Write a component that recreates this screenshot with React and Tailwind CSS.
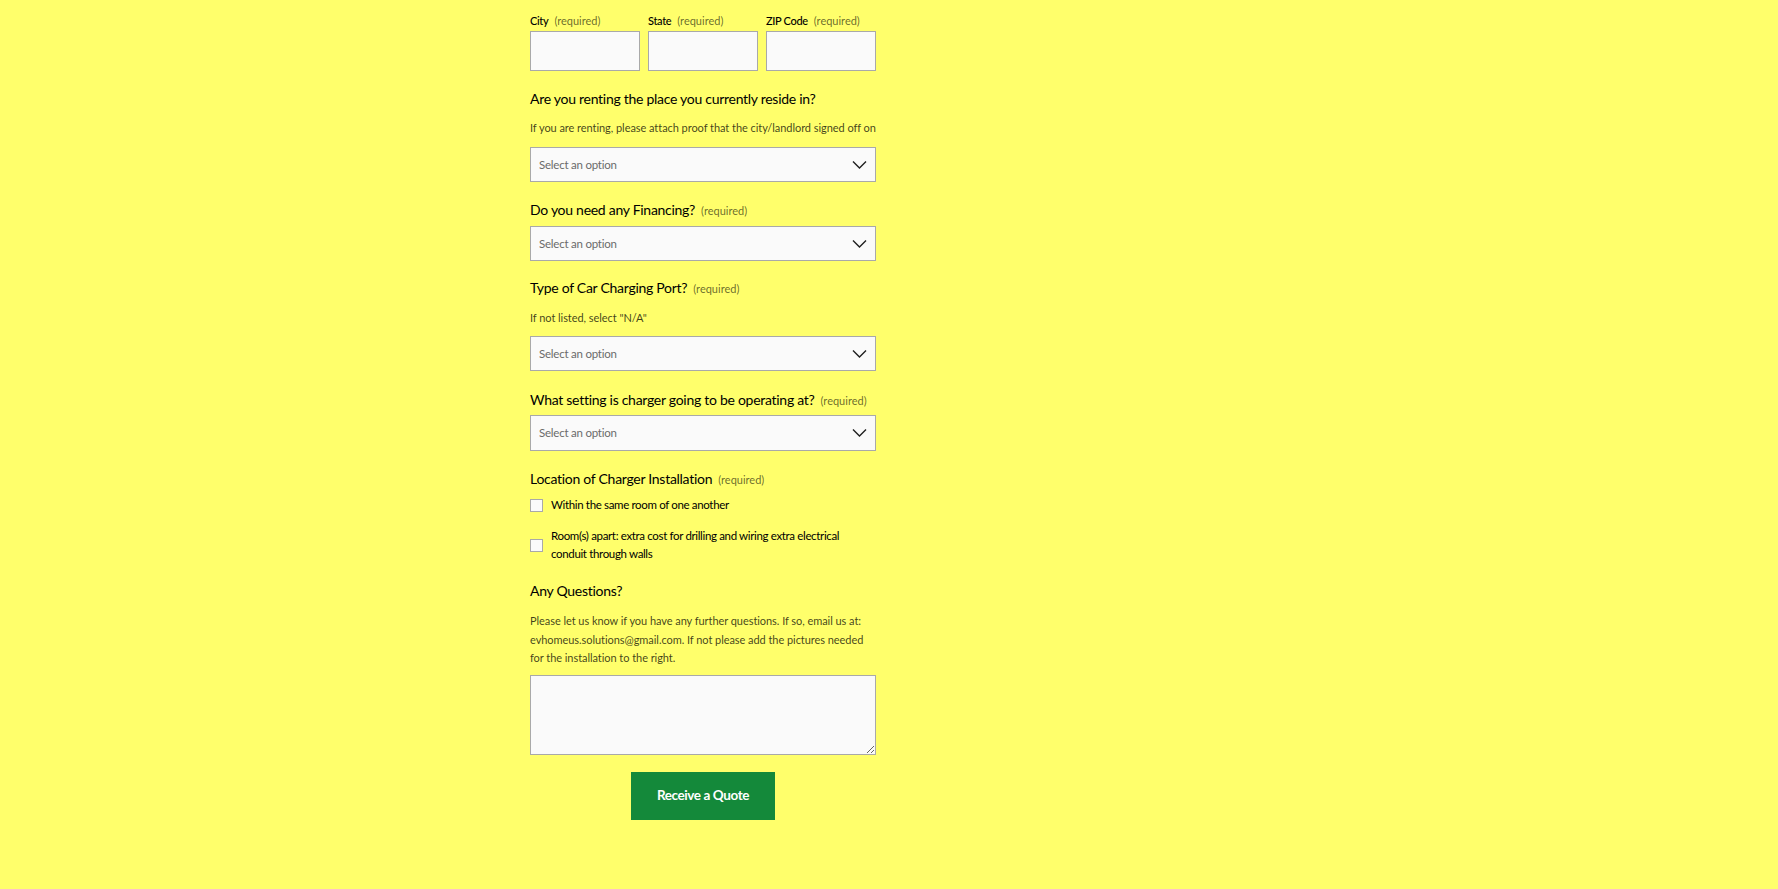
import { useState } from 'react'

const font = { fontFamily: 'Lato, "Liberation Sans", sans-serif' }

function Required() {
  return <span className="ml-[6px] text-[11px] font-normal text-black/60 tracking-normal">(required)</span>
}

function Chevron() {
  return (
    <svg className="pointer-events-none absolute right-[9px] top-1/2 -translate-y-1/2" width="15" height="9" viewBox="0 0 15 9" fill="none">
      <path d="M1 1l6.5 6.5L14 1" stroke="#1f1f1f" strokeWidth="1.4" />
    </svg>
  )
}

function SelectBox({ className = '', value, onChange }) {
  return (
    <div className={`relative ${className}`}>
      <select
        value={value}
        onChange={onChange}
        className="w-full h-full appearance-none bg-[#fafafa] border border-[#a9a9a9] pl-[8px] text-[11.5px] text-[#6b6b6b] tracking-[-0.02em] outline-none"
      >
        <option value="">Select an option</option>
        <option value="yes">Yes</option>
        <option value="no">No</option>
      </select>
      <Chevron />
    </div>
  )
}

function Heading({ children, required, className = '' }) {
  return (
    <h3 className={`text-[14px] leading-[20px] text-black tracking-[-0.02em] ${className}`}>
      {children}
      {required && <Required />}
    </h3>
  )
}

export default function App() {
  const [form, setForm] = useState({ city: '', state: '', zip: '', renting: '', financing: '', port: '', setting: '', notes: '' })
  const [locations, setLocations] = useState({ same: false, apart: false })

  const set = (key) => (e) => setForm({ ...form, [key]: e.target.value })

  return (
    <div className="min-h-[889px] w-full bg-[#ffff6b]" style={font}>
      <form className="ml-[530px] w-[346px] pt-[13px] pb-[70px]" onSubmit={(e) => e.preventDefault()}>
        {/* City / State / ZIP */}
        <div className="grid grid-cols-3 gap-[8px]">
          {[
            ['City', 'city'],
            ['State', 'state'],
            ['ZIP Code', 'zip'],
          ].map(([label, key]) => (
            <label key={key} className="block">
              <span className="block text-[11px] leading-[16px] mb-[2px] font-medium text-black tracking-[-0.03em]">
                {label}
                <Required />
              </span>
              <input
                type="text"
                value={form[key]}
                onChange={set(key)}
                className="block w-full h-[40px] bg-[#fafafa] border border-[#a9a9a9] outline-none px-2 text-[12px]"
              />
            </label>
          ))}
        </div>

        <Heading className="mt-[18px]">Are you renting the place you currently reside in?</Heading>
        <p className="mt-[10px] text-[11px] leading-[18px] text-black/75 tracking-[-0.005em]">
          If you are renting, please attach proof that the city/landlord signed off on
        </p>
        <SelectBox className="mt-[10px] h-[35px]" value={form.renting} onChange={set('renting')} />

        <Heading required className="mt-[18px]">Do you need any Financing?</Heading>
        <SelectBox className="mt-[5px] h-[35px]" value={form.financing} onChange={set('financing')} />

        <Heading required className="mt-[17px]">Type of Car Charging Port?</Heading>
        <p className="mt-[10px] text-[11px] leading-[18px] text-black/75 tracking-[-0.005em]">If not listed, select "N/A"</p>
        <SelectBox className="mt-[9px] h-[35px]" value={form.port} onChange={set('port')} />

        <Heading required className="mt-[19px]">What setting is charger going to be operating at?</Heading>
        <SelectBox className="mt-[4px] h-[36px]" value={form.setting} onChange={set('setting')} />

        {/* Location checkboxes */}
        <Heading required className="mt-[18px]">Location of Charger Installation</Heading>
        <label className="mt-[6px] flex items-center gap-[8px] text-[11.5px] leading-[18px] text-black tracking-[-0.03em]">
          <input
            type="checkbox"
            checked={locations.same}
            onChange={(e) => setLocations({ ...locations, same: e.target.checked })}
            className="appearance-none shrink-0 w-[13px] h-[13px] bg-[#fafafa] border border-[#a9a9a9] checked:bg-[#14893a]"
          />
          Within the same room of one another
        </label>
        <label className="mt-[13px] flex items-center gap-[8px] text-[11.5px] leading-[18px] text-black tracking-[-0.03em]">
          <input
            type="checkbox"
            checked={locations.apart}
            onChange={(e) => setLocations({ ...locations, apart: e.target.checked })}
            className="appearance-none shrink-0 w-[13px] h-[13px] bg-[#fafafa] border border-[#a9a9a9] checked:bg-[#14893a]"
          />
          <span className="pr-[10px]">Room(s) apart: extra cost for drilling and wiring extra electrical conduit through walls</span>
        </label>

        <Heading className="mt-[18px]">Any Questions?</Heading>
        <p className="mt-[11px] text-[11px] leading-[18.5px] text-black/75 tracking-[-0.005em]">
          Please let us know if you have any further questions. If so, email us at: evhomeus.solutions@gmail.com. If not please add the pictures needed for the installation to the right.
        </p>
        <textarea
          value={form.notes}
          onChange={set('notes')}
          className="block mt-[7px] w-full h-[80px] bg-[#fafafa] border border-[#a9a9a9] outline-none p-2 text-[12px]"
        />

        <div className="mt-[17px] flex justify-center">
          <button
            type="submit"
            className="w-[144px] h-[48px] bg-[#14893a] text-white text-[13.5px] font-bold tracking-[-0.03em]"
          >
            Receive a Quote
          </button>
        </div>
      </form>
    </div>
  )
}
